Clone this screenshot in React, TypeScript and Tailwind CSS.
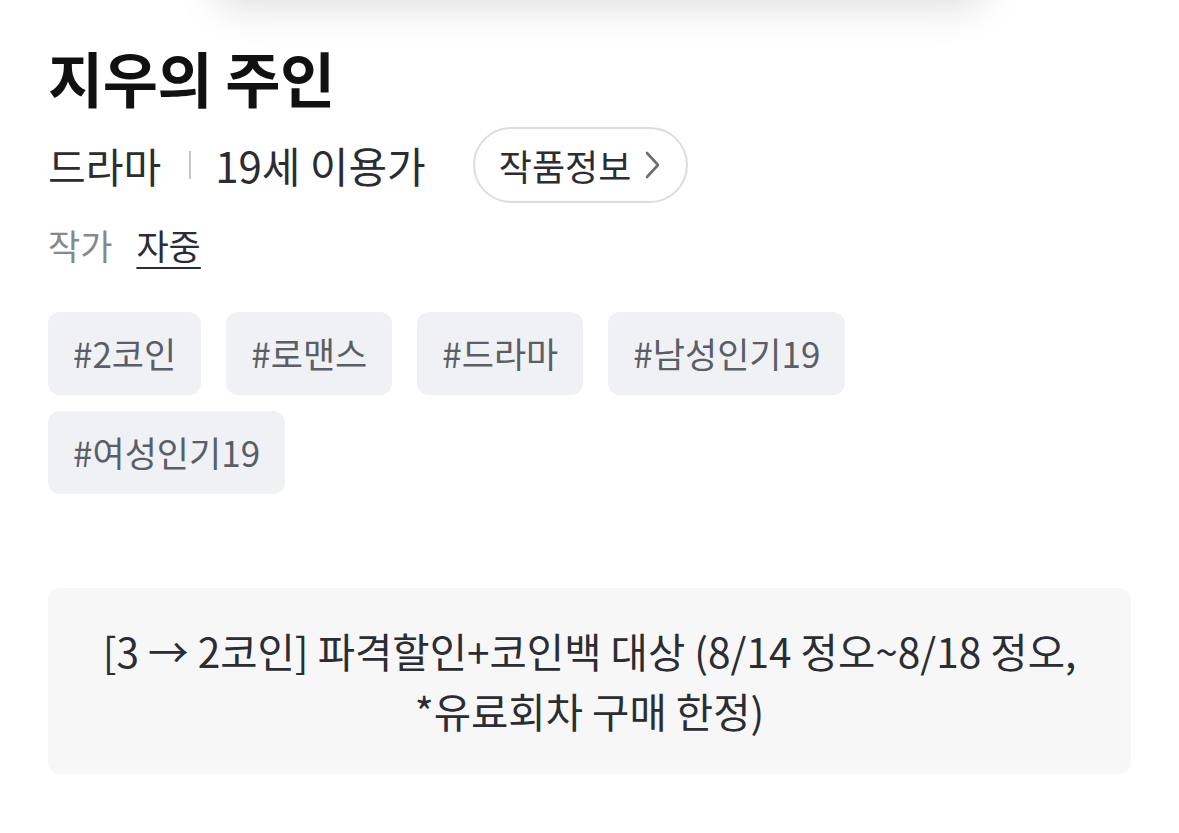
const tags = ['#2코인', '#로맨스', '#드라마', '#남성인기19', '#여성인기19']

function ChevronRight() {
  return (
    <svg width="20" height="28" viewBox="0 0 20 28" fill="none" className="ml-[12px]">
      <path d="M4 2 L15 14 L4 26" stroke="#6b6f76" strokeWidth="2.6" strokeLinecap="round" strokeLinejoin="round" />
    </svg>
  )
}

export default function App() {
  return (
    <div
      className="relative min-h-[833px] w-full overflow-hidden bg-white text-[#2b2d33]"
      style={{ fontFamily: '"Noto Sans CJK KR", "Noto Sans", sans-serif' }}
    >
      {/* shadow of the cover card sitting above the fold */}
      <div className="absolute -top-[70px] left-[210px] h-[70px] w-[780px] rounded-[40px] bg-white shadow-[0_8px_40px_rgba(0,0,0,0.13)]" />

      <div className="px-12 pt-[39px]">
        <h1 className="text-[60px] font-semibold leading-[76px] tracking-[-0.5px] text-[#111111]">지우의 주인</h1>

        <div className="mt-3 flex h-[76px] items-center">
          <span className="text-[41px] leading-none">드라마</span>
          <span className="ml-[28px] mr-[24px] h-[28px] w-[2px] bg-[#c4c6ca]" />
          <span className="text-[42px] leading-none">19세 이용가</span>
          <button className="ml-[47px] flex h-[76px] items-center rounded-full border-2 border-[#dcdde0] pl-[24px] pr-[23px]">
            <span className="text-[36px] leading-none text-[#2b2d33]">작품정보</span>
            <ChevronRight />
          </button>
        </div>

        <div className="mt-5 flex h-[44px] items-center text-[35px]">
          <span className="text-[#85888e]">작가</span>
          <span className="ml-[24px] text-[#2b2d33] underline decoration-2 underline-offset-[7px]">자중</span>
        </div>

        <div className="mt-[45px] flex max-w-[900px] flex-wrap gap-x-[25px] gap-y-4">
          {tags.map((t) => (
            <span
              key={t}
              className="flex h-[83px] items-center rounded-xl bg-[#f0f1f4] px-[25px] text-[35px] text-[#5a5e66]"
            >
              {t}
            </span>
          ))}
        </div>

        <div className="mt-[94px] rounded-xl bg-[#f7f7f8] px-8 py-[33px] text-center text-[40.6px] leading-[60px] text-[#2b2d33]">
          [3 → 2코인] 파격할인+코인백 대상 (8/14 정오~8/18 정오,
          <br />
          *유료회차 구매 한정)
        </div>
      </div>
    </div>
  )
}
